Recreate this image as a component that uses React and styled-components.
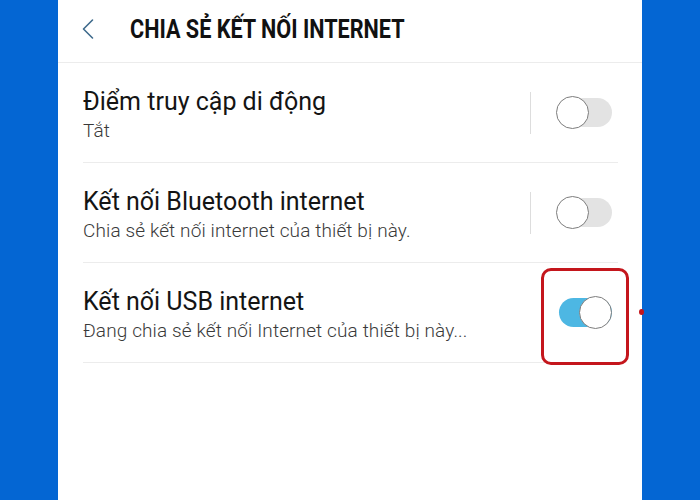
import styled, { createGlobalStyle } from "styled-components";

const GlobalStyle = createGlobalStyle`
  * {
    box-sizing: border-box;
  }

  body {
    margin: 0;
    background-color: #0466d3;
    font-family: Roboto, "Noto Sans", sans-serif;
  }
`;

const items = [
  { title: "Điểm truy cập di động", subtitle: "Tắt", on: false, divider: true },
  {
    title: "Kết nối Bluetooth internet",
    subtitle: "Chia sẻ kết nối internet của thiết bị này.",
    on: false,
    divider: true,
  },
  {
    title: "Kết nối USB internet",
    subtitle: "Đang chia sẻ kết nối Internet của thiết bị này...",
    on: true,
    divider: false,
    marked: true,
  },
];

const App = () => {
  return (
    <>
      <GlobalStyle />
      <Page>
        <Phone>
          <Header>
            <BackButton>
              <svg width="14" height="22" viewBox="0 0 14 22">
                <path
                  d="M11.5 2 L2.5 11 L11.5 20"
                  fill="none"
                  stroke="#3f6b8c"
                  strokeWidth="1.6"
                  strokeLinecap="round"
                  strokeLinejoin="round"
                />
              </svg>
            </BackButton>
            <Title>CHIA SẺ KẾT NỐI INTERNET</Title>
          </Header>
          <List>
            {items.map((item) => (
              <Row key={item.title}>
                <RowText>
                  <RowTitle>{item.title}</RowTitle>
                  <RowSubtitle>{item.subtitle}</RowSubtitle>
                </RowText>
                <RowControl>
                  <Divider $visible={item.divider} />
                  <ToggleWrap>
                    <Toggle $on={item.on}>
                      <Knob $on={item.on} />
                    </Toggle>
                    {item.marked && <Highlight />}
                  </ToggleWrap>
                </RowControl>
              </Row>
            ))}
          </List>
          <Marker />
        </Phone>
      </Page>
    </>
  );
};

export default App;

// Styled components

const Page = styled.div`
  width: 700px;
  height: 500px;
  display: flex;
  padding-left: 58px;
`;

const Phone = styled.div`
  position: relative;
  width: 584px;
  height: 100%;
  background-color: #ffffff;
  display: flex;
  flex-direction: column;
`;

const Header = styled.header`
  height: 63px;
  display: flex;
  align-items: center;
  padding-left: 23px;
  padding-bottom: 4px;
  border-bottom: 1px solid #ececec;
`;

const BackButton = styled.div`
  width: 49px;
  display: flex;
  align-items: center;
`;

const Title = styled.h1`
  margin: 0;
  font-family: Roboto, "Noto Sans", sans-serif;
  font-weight: 700;
  font-size: 25px;
  color: #111111;
  white-space: nowrap;
  transform: scaleX(0.865);
  transform-origin: left center;
`;

const List = styled.ul`
  margin: 0;
  padding: 0 24px 0 25px;
  list-style: none;
`;

const Row = styled.li`
  height: 100px;
  display: flex;
  align-items: center;
  justify-content: space-between;
  border-bottom: 1px solid #ececec;
`;

const RowText = styled.div`
  display: flex;
  flex-direction: column;
  gap: 3px;
  padding-top: 4px;
`;

const RowTitle = styled.p`
  margin: 0;
  font-size: 25px;
  line-height: 30px;
  color: #141414;
`;

const RowSubtitle = styled.p`
  margin: 0;
  font-size: 19px;
  font-weight: 300;
  line-height: 22px;
  letter-spacing: 0.12px;
  color: #3a3a3a;
`;

const RowControl = styled.div`
  display: flex;
  align-items: center;
  gap: 25px;
  padding-right: 6px;
`;

const Divider = styled.div`
  width: 1px;
  height: 42px;
  background-color: ${(props) => (props.$visible ? "#dddddd" : "transparent")};
`;

const ToggleWrap = styled.div`
  position: relative;
`;

const Toggle = styled.div`
  position: relative;
  width: 56px;
  height: 33px;
  display: flex;
  align-items: center;

  &::before {
    content: "";
    position: absolute;
    left: 3px;
    right: 0;
    top: 2px;
    bottom: 2px;
    border-radius: 15px;
    background-color: ${(props) => (props.$on ? "#4db7e3" : "#e3e3e3")};
  }
`;

const Knob = styled.div`
  position: absolute;
  top: 0;
  left: ${(props) => (props.$on ? "23px" : "0")};
  width: 33px;
  height: 33px;
  border-radius: 50%;
  background-color: #ffffff;
  border: 1.5px solid #7d7d7d;
`;

const Highlight = styled.div`
  position: absolute;
  left: -15px;
  top: -28px;
  width: 88px;
  height: 97px;
  border: 3px solid #c4161c;
  border-radius: 10px;
`;

const Marker = styled.div`
  position: absolute;
  right: -2px;
  top: 309px;
  width: 5px;
  height: 6px;
  border-radius: 50%;
  background-color: #c4161c;
`;
